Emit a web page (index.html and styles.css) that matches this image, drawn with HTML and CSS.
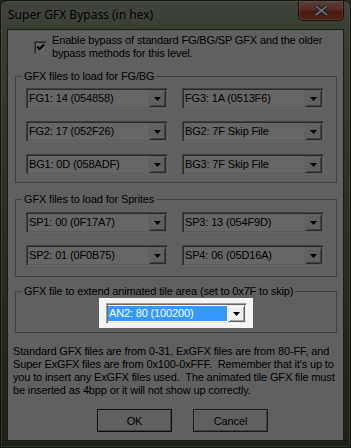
FILE: index.html
```html
<!DOCTYPE html>
<html lang="en">
<head>
<meta charset="utf-8">
<title>Super GFX Bypass (in hex)</title>
<link rel="stylesheet" href="styles.css">
</head>
<body>
<div class="window">
  <div class="titlebar">
    <span class="title">Super GFX Bypass (in hex)</span>
    <button class="close" aria-label="Close">
      <svg width="13" height="11" viewBox="0 0 13 11"><path d="M1.5 1.5 L11.5 9.5 M11.5 1.5 L1.5 9.5" stroke="#3a3a3a" stroke-width="4" stroke-linecap="square"/><path d="M1.5 1.5 L11.5 9.5 M11.5 1.5 L1.5 9.5" stroke="#ffffff" stroke-width="2" stroke-linecap="square"/></svg>
    </button>
  </div>
  <div class="client">
    <label class="check-row">
      <span class="checkbox"><svg width="9" height="9" viewBox="0 0 9 9"><path d="M1 3.5 L3.5 6 L8 1.5" fill="none" stroke="#000" stroke-width="2"/></svg></span>
      <span class="check-text">Enable bypass of standard FG/BG/SP GFX and the older<br>bypass methods for this level.</span>
    </label>

    <fieldset class="group group-fgbg">
      <legend>GFX files to load for FG/BG</legend>
      <div class="group-body combo-grid">
        <div class="combo"><span class="combo-text">FG1: 14 (054858)</span><span class="combo-btn"><svg width="7" height="4" viewBox="0 0 7 4"><path d="M0 0H7L3.5 4Z" fill="#000"/></svg></span></div>
        <div class="combo"><span class="combo-text">FG3: 1A (0513F6)</span><span class="combo-btn"><svg width="7" height="4" viewBox="0 0 7 4"><path d="M0 0H7L3.5 4Z" fill="#000"/></svg></span></div>
        <div class="combo"><span class="combo-text">FG2: 17 (052F26)</span><span class="combo-btn"><svg width="7" height="4" viewBox="0 0 7 4"><path d="M0 0H7L3.5 4Z" fill="#000"/></svg></span></div>
        <div class="combo"><span class="combo-text">BG2: 7F Skip File</span><span class="combo-btn"><svg width="7" height="4" viewBox="0 0 7 4"><path d="M0 0H7L3.5 4Z" fill="#000"/></svg></span></div>
        <div class="combo"><span class="combo-text">BG1: 0D (058ADF)</span><span class="combo-btn"><svg width="7" height="4" viewBox="0 0 7 4"><path d="M0 0H7L3.5 4Z" fill="#000"/></svg></span></div>
        <div class="combo"><span class="combo-text">BG3: 7F Skip File</span><span class="combo-btn"><svg width="7" height="4" viewBox="0 0 7 4"><path d="M0 0H7L3.5 4Z" fill="#000"/></svg></span></div>
      </div>
    </fieldset>

    <fieldset class="group group-sprites">
      <legend>GFX files to load for Sprites</legend>
      <div class="group-body combo-grid">
        <div class="combo"><span class="combo-text">SP1: 00 (0F17A7)</span><span class="combo-btn"><svg width="7" height="4" viewBox="0 0 7 4"><path d="M0 0H7L3.5 4Z" fill="#000"/></svg></span></div>
        <div class="combo"><span class="combo-text">SP3: 13 (054F9D)</span><span class="combo-btn"><svg width="7" height="4" viewBox="0 0 7 4"><path d="M0 0H7L3.5 4Z" fill="#000"/></svg></span></div>
        <div class="combo"><span class="combo-text">SP2: 01 (0F0B75)</span><span class="combo-btn"><svg width="7" height="4" viewBox="0 0 7 4"><path d="M0 0H7L3.5 4Z" fill="#000"/></svg></span></div>
        <div class="combo"><span class="combo-text">SP4: 06 (05D16A)</span><span class="combo-btn"><svg width="7" height="4" viewBox="0 0 7 4"><path d="M0 0H7L3.5 4Z" fill="#000"/></svg></span></div>
      </div>
    </fieldset>

    <fieldset class="group group-anim">
      <legend>GFX file to extend animated tile area (set to 0x7F to skip)</legend>
      <div class="group-body anim-body">
        <div class="spotlight">
          <div class="combo combo-focused"><span class="combo-text">AN2: 80 (100200)</span><span class="combo-btn"><svg width="7" height="4" viewBox="0 0 7 4"><path d="M0 0H7L3.5 4Z" fill="#000"/></svg></span></div>
        </div>
      </div>
    </fieldset>

    <p class="note">Standard GFX files are from 0-31, ExGFX files are from 80-FF, and<br>Super ExGFX files are from 0x100-0xFFF.&nbsp; Remember that it's up to<br>you to insert any ExGFX files used.&nbsp; The animated tile GFX file must<br>be inserted as 4bpp or it will not show up correctly.</p>

    <div class="buttons">
      <button class="btn btn-default">OK</button>
      <button class="btn">Cancel</button>
    </div>
  </div>
</div>
<div class="dim"></div>
</body>
</html>
```

FILE: styles.css
```css
* { box-sizing: border-box; }

html, body {
  margin: 0;
  padding: 0;
  width: 351px;
  height: 448px;
  overflow: hidden;
  background: #5a6650;
}

.window {
  width: 351px;
  height: 448px;
  display: flex;
  flex-direction: column;
  border: 1px solid #2a3024;
  border-radius: 7px 7px 0 0;
  background: linear-gradient(to bottom, #9ea890 0, #8e9a7e 30px, #6a7858 45%, #48553b 100%);
  box-shadow: inset 0 0 0 1px rgba(255,255,255,0.3);
}

.titlebar {
  height: 29px;
  flex: none;
  display: flex;
  align-items: flex-start;
  justify-content: space-between;
  padding: 0 6px 0 7px;
}

.title {
  font-family: "Noto Sans", "Liberation Sans", sans-serif;
  font-size: 12px;
  line-height: 16px;
  margin-top: 6px;
  color: #000;
  text-shadow: 0 0 8px rgba(255,255,255,0.6);
}

.close {
  width: 46px;
  height: 20px;
  margin: 0;
  padding: 0;
  border: 1px solid #3a2a26;
  border-top: none;
  border-radius: 0 0 5px 5px;
  background: linear-gradient(to bottom, #e0a090 0, #d06f5a 45%, #bd3f2a 55%, #c9553c 100%);
  box-shadow: inset 0 0 0 1px rgba(255,255,255,0.3);
  display: flex;
  align-items: center;
  justify-content: center;
}

.close svg { display: block; }

.client {
  flex: 1;
  margin: 0 7px 7px 7px;
  background: #f0f0f0;
  box-shadow: 0 0 0 1px #3c4634;
  display: flex;
  flex-direction: column;
  font-family: "Liberation Sans", Arial, sans-serif;
  font-size: 11px;
  line-height: 13px;
  letter-spacing: -0.15px;
  color: #000;
  padding-top: 4px;
}

.check-row {
  display: flex;
  align-items: flex-start;
  padding-left: 26px;
  gap: 5px;
}

.checkbox {
  width: 13px;
  height: 13px;
  margin-top: 7px;
  flex: none;
  background: #fff;
  border: 1px solid;
  border-color: #a0a0a0 #fff #fff #a0a0a0;
  box-shadow: inset 1px 1px #696969, inset -1px -1px #e3e3e3;
  display: flex;
  align-items: center;
  justify-content: center;
}

.checkbox svg { display: block; }

.check-text { white-space: nowrap; }

.group {
  margin: 0 6px 0 7px;
  padding: 0;
  min-width: 0;
  border: 1px solid #a0a0a0;
}

.group legend {
  padding: 0 2px;
  margin-left: 6px;
  line-height: 13px;
  white-space: nowrap;
}

.group-fgbg { margin-top: 10px; }
.group-sprites { margin-top: 10px; }
.group-anim { margin-top: 8px; }

.combo-grid {
  display: grid;
  grid-template-columns: 142px 142px;
  column-gap: 14px;
  row-gap: 12px;
}

.group-fgbg .group-body { padding: 5px 11px 7px 10px; }
.group-sprites .group-body { padding: 6px 11px 10px 10px; }

.anim-body {
  display: flex;
  justify-content: center;
  padding: 0 0 4px 0;
}

.spotlight {
  position: relative;
  z-index: 2;
  background: #f4f4f4;
  padding: 5px 6px 4px 7px;
}

.combo {
  display: flex;
  width: 142px;
  height: 21px;
  background: #fff;
  border: 1px solid;
  border-color: #a0a0a0 #fff #fff #a0a0a0;
  box-shadow: inset 1px 1px #696969, inset -1px -1px #e3e3e3;
  padding: 1px;
}

.combo-focused { width: 141px; }

.combo-text {
  flex: 1;
  min-width: 0;
  padding-left: 1px;
  line-height: 17px;
  white-space: nowrap;
  overflow: hidden;
}

.combo-focused .combo-text {
  background: #3399ff;
  color: #fff;
  margin: 1px 1px 1px 0;
  line-height: 15px;
}

.combo-btn {
  width: 17px;
  height: 17px;
  flex: none;
  background: #f0f0f0;
  border: 1px solid;
  border-color: #e3e3e3 #696969 #696969 #e3e3e3;
  box-shadow: inset 1px 1px #fff, inset -1px -1px #a0a0a0;
  display: flex;
  align-items: center;
  justify-content: center;
}

.combo-btn svg { display: block; }

.note {
  margin: 12px 0 0 0;
  padding: 0 5px;
  white-space: nowrap;
}

.buttons {
  display: flex;
  gap: 21px;
  padding-left: 89px;
  margin-top: 12px;
}

.btn {
  width: 75px;
  height: 23px;
  margin: 0;
  padding: 0;
  font-family: inherit;
  font-size: 11px;
  letter-spacing: inherit;
  color: #000;
  background: #f0f0f0;
  border: 1px solid #404040;
  box-shadow: inset 1px 1px #fff, inset -1px -1px #a0a0a0;
}

.btn-default { border-color: #202020; }

.dim {
  position: fixed;
  inset: 0;
  z-index: 1;
  background: rgba(0, 0, 0, 0.6);
}
```
